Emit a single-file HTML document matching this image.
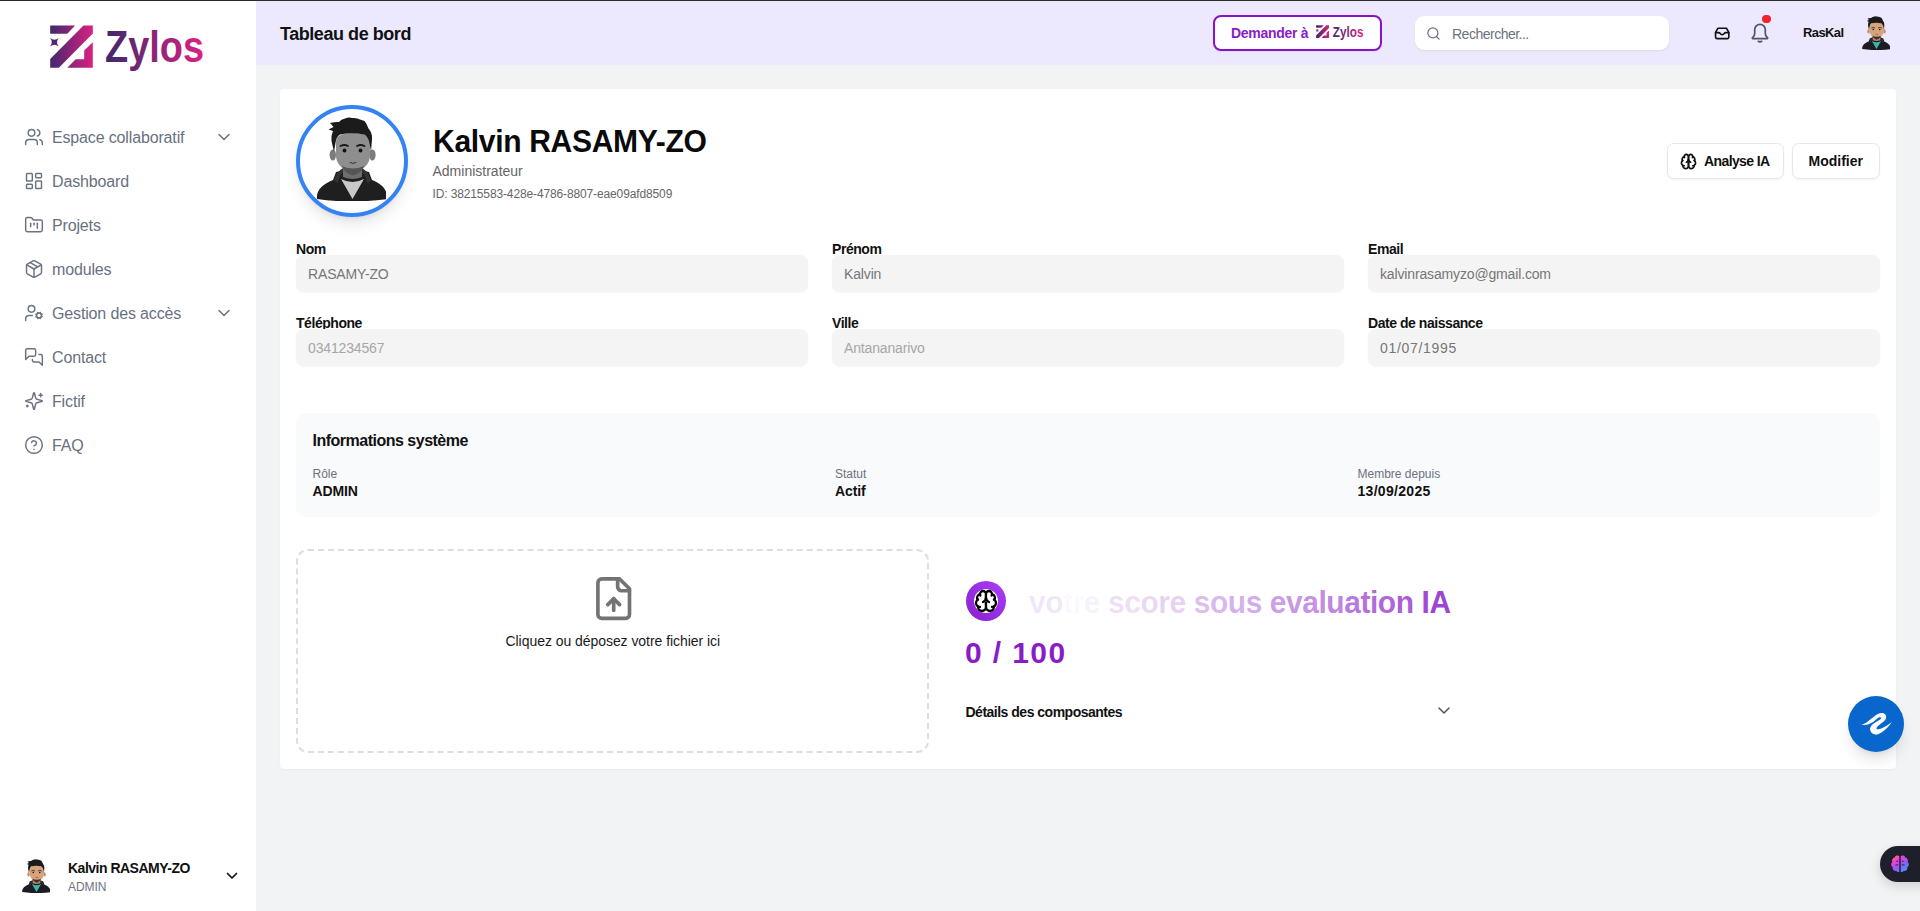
<!DOCTYPE html>
<html lang="fr">
<head>
<meta charset="utf-8">
<title>Zylos - Profil</title>
<style>
*{box-sizing:border-box;margin:0;padding:0}
html,body{width:1920px;height:911px;overflow:hidden}
body{font-family:"Liberation Sans",sans-serif;background:#f2f3f5;position:relative;color:#111}
.abs{position:absolute}
.topline{position:absolute;left:0;top:0;width:1920px;height:1px;background:#2b2b29;z-index:50}
/* sidebar */
.sidebar{position:absolute;left:0;top:0;width:256px;height:911px;background:#fff}
.nav{position:absolute;left:0;top:115px;width:256px}
.nav .item{position:absolute;left:0;width:256px;height:44px}
.nav .item svg.ic{position:absolute;left:24px;top:12px;width:20px;height:20px}
.nav .item .lbl{position:absolute;left:52px;top:13px;font-size:16px;line-height:20px;color:#687180;white-space:nowrap;letter-spacing:-0.15px}
.nav .item svg.chev{position:absolute;left:216px;top:15px;width:16px;height:14px}

.t{position:absolute;white-space:nowrap;line-height:1}
.avatar-ring{position:absolute;left:296px;top:105px;width:112px;height:112px;border-radius:50%;border:4px solid #3382f6;background:#fff;box-shadow:0 10px 15px -3px rgba(0,0,0,.1),0 4px 6px -4px rgba(0,0,0,.1);overflow:hidden}
.btn{position:absolute;top:143px;height:35.5px;background:#fff;border:1px solid #e5e7eb;border-radius:7px;box-shadow:0 1px 2px rgba(0,0,0,.05)}
.lab{font-size:14px;font-weight:700;color:#111;letter-spacing:-0.45px}
.inp{position:absolute;width:512px;height:37px;background:#f4f4f4;border-radius:8px;box-shadow:0 1px 2px rgba(0,0,0,.04)}
.val{font-size:14px;color:#767676;letter-spacing:-0.15px}
.ph{color:#a6a6a6}
.info{position:absolute;left:296px;top:413px;width:1584px;height:104px;background:#f9fafb;border-radius:10px}
.il{font-size:12px;color:#6b7280;letter-spacing:0px}
.iv{font-size:14px;font-weight:700;color:#111;letter-spacing:-0.1px}
.upload{position:absolute;left:296px;top:549px;width:633px;height:203.5px;border:2px dashed #dddee1;border-radius:12px;background:#fff}
/* header */
.h-title{position:absolute;left:280px;top:23px;font-size:18px;line-height:22px;font-weight:700;color:#111;letter-spacing:-0.45px;white-space:nowrap}
.ask{position:absolute;left:1213px;top:15px;width:169px;height:36px;border:2px solid #8a12c6;border-radius:8px;background:#fff;box-shadow:0 1px 2px rgba(0,0,0,.06)}
.ask .t{position:absolute;left:16px;top:8.2px;font-size:14px;line-height:16px;font-weight:700;color:#8a1cc7;letter-spacing:-0.3px;white-space:nowrap}
.search{position:absolute;left:1415px;top:15.5px;width:254px;height:34.5px;background:#fff;border-radius:9px;box-shadow:0 1px 2px rgba(0,0,0,.08)}
.search .t{position:absolute;left:37px;top:10px;font-size:14px;line-height:16px;color:#6b7280;letter-spacing:-0.5px;white-space:nowrap}
.raskal{position:absolute;left:1803px;top:26px;font-size:13px;line-height:14px;font-weight:700;color:#111;letter-spacing:-0.6px;white-space:nowrap}

.header{position:absolute;left:256px;top:0;width:1664px;height:65px;background:#ece9fe}
.main{position:absolute;left:256px;top:65px;width:1664px;height:846px;background:#f2f3f5}
.card{position:absolute;left:280px;top:89px;width:1616px;height:680px;background:#fff;border-radius:4px;box-shadow:0 1px 2px rgba(0,0,0,.04)}
</style>
</head>
<body>
<div class="topline"></div>
<svg width="0" height="0" style="position:absolute">
<defs>
<symbol id="av" viewBox="20 12 72 84">
  <path fill="var(--hood)" d="M23 94C22 85 29 79 39 75L42 67Q58.5 62 75 67L78 75C88 79 94 85 93 94Q58 99 23 94Z"/>
  <path fill="var(--hood2)" d="M40 76Q42 67 49 63L50 67Q45 70 44 78Z M77 76Q75 67 68 63L67 67Q72 70 73 78Z"/>
  <path fill="var(--skin2)" d="M49 58L49 72Q58.5 76 68 72L68 58Z"/>
  <path fill="var(--shirt)" d="M47 74Q58.5 80 70 74L58.5 94Z"/>
  <ellipse cx="38.8" cy="50" rx="3.2" ry="5.5" fill="var(--ear)"/>
  <ellipse cx="78.4" cy="50" rx="3.2" ry="5.5" fill="var(--ear)"/>
  <path fill="var(--skin)" d="M42 37Q42 28 59 28Q76 28 76 37L76 52Q75 60 67 65Q59 70 51 65Q43 60 42 52Z"/>
  <path fill="var(--beard)" d="M48 61Q59 66 70 61Q67 69 59 70.5Q51 69 48 61Z"/>
  <path fill="var(--hair)" d="M40 47L37.5 36Q37 30 39 26L34.5 24.5L39.5 22Q38 20 36 18Q42 16.5 45 17Q47 14 51 13.5Q55 12 58 13Q63 12.5 66 14.5L70.5 16Q73 19 74.5 23.5Q78.5 28 78 34L77 47L75.5 38Q74 31 70 29.5Q58 27 46 29.5Q42 32 41.5 38Z"/>
  <circle cx="50.5" cy="45.5" r="1.9" fill="#111"/><circle cx="66.5" cy="45.5" r="1.9" fill="#111"/>
  <path d="M46.5 41Q50.5 39 54 41M63 41Q66.5 39 70.5 41" stroke="var(--hair)" stroke-width="1.8" fill="none" stroke-linecap="round"/>
  <path d="M56 57.5Q59 59.5 62 57.5" stroke="#333" stroke-width="1" fill="none" stroke-linecap="round"/>
</symbol>
</defs>
</svg>
<div class="sidebar">
  <svg style="position:absolute;left:0;top:0" width="256" height="90" viewBox="0 0 256 90">
    <defs>
      <linearGradient id="lg1" gradientUnits="userSpaceOnUse" x1="0" y1="0" x2="43" y2="0"><stop offset="0" stop-color="#3f286b"/><stop offset="1" stop-color="#dc2183"/></linearGradient>
      <linearGradient id="lgt" gradientUnits="userSpaceOnUse" x1="106" y1="0" x2="204" y2="0"><stop offset="0" stop-color="#3f286b"/><stop offset="1" stop-color="#dc2183"/></linearGradient>
    </defs>
    <g transform="translate(50 25)" fill="url(#lg1)">
      <path d="M0.2 0.5H25.1L17.3 8.8H0.2Z"/>
      <path d="M33.5 0.5H42.8V8.6L8.9 42.8H0.2V34Z"/>
      <path d="M42.8 17.3V42.8H17.3L25.7 34.3H34.2V25.4Z"/>
      <path d="M4.4 11.2Q4.95 16.75 10.5 17.3Q4.95 17.85 4.4 23.4Q3.85 17.85 -1.7 17.3Q3.85 16.75 4.4 11.2Z" transform="rotate(45 4.4 17.3)"/>
    </g>
    <text x="105" y="62.3" font-family="Liberation Sans" font-weight="700" font-size="45" textLength="99" lengthAdjust="spacingAndGlyphs" fill="url(#lgt)">Zylos</text>
  </svg>
  <div class="nav">
  <div class="item" style="top:0px"><svg class="ic" fill="none" stroke="#6b7280" stroke-width="1.75" stroke-linecap="round" stroke-linejoin="round" viewBox="0 0 24 24"><path d="M16 21v-2a4 4 0 0 0-4-4H6a4 4 0 0 0-4 4v2"/><circle cx="9" cy="7" r="4"/><path d="M22 21v-2a4 4 0 0 0-3-3.87"/><path d="M16 3.13a4 4 0 0 1 0 7.75"/></svg><span class="lbl">Espace collaboratif</span><svg class="chev" viewBox="0 0 16 14" fill="none" stroke="#6b7280" stroke-width="1.5" stroke-linecap="round" stroke-linejoin="round"><path d="M3 4.5l5 5 5-5"/></svg></div>
  <div class="item" style="top:44px"><svg class="ic" fill="none" stroke="#6b7280" stroke-width="1.75" stroke-linecap="round" stroke-linejoin="round" viewBox="0 0 24 24"><rect width="7" height="9" x="3" y="3" rx="1"/><rect width="7" height="5" x="14" y="3" rx="1"/><rect width="7" height="9" x="14" y="12" rx="1"/><rect width="7" height="5" x="3" y="16" rx="1"/></svg><span class="lbl">Dashboard</span></div>
  <div class="item" style="top:88px"><svg class="ic" fill="none" stroke="#6b7280" stroke-width="1.75" stroke-linecap="round" stroke-linejoin="round" viewBox="0 0 24 24"><path d="M4 20h16a2 2 0 0 0 2-2V8a2 2 0 0 0-2-2h-7.93a2 2 0 0 1-1.66-.9l-.82-1.2A2 2 0 0 0 7.93 3H4a2 2 0 0 0-2 2v13c0 1.1.9 2 2 2Z"/><path d="M8 10v4"/><path d="M12 10v2"/><path d="M16 10v6"/></svg><span class="lbl">Projets</span></div>
  <div class="item" style="top:132px"><svg class="ic" fill="none" stroke="#6b7280" stroke-width="1.75" stroke-linecap="round" stroke-linejoin="round" viewBox="0 0 24 24"><path d="m7.5 4.27 9 5.15"/><path d="M21 8a2 2 0 0 0-1-1.73l-7-4a2 2 0 0 0-2 0l-7 4A2 2 0 0 0 3 8v8a2 2 0 0 0 1 1.73l7 4a2 2 0 0 0 2 0l7-4A2 2 0 0 0 21 16Z"/><path d="m3.3 7 8.7 5 8.7-5"/><path d="M12 22V12"/></svg><span class="lbl">modules</span></div>
  <div class="item" style="top:176px"><svg class="ic" fill="none" stroke="#6b7280" stroke-width="1.75" stroke-linecap="round" stroke-linejoin="round" viewBox="0 0 24 24"><path d="M10 15H6a4 4 0 0 0-4 4v2"/><path d="m14.305 16.53.923-.382"/><path d="m15.228 13.852-.923-.383"/><path d="m16.852 12.228-.383-.923"/><path d="m16.852 17.772-.383.924"/><path d="m19.148 12.228.383-.923"/><path d="m19.53 18.696-.382-.924"/><path d="m20.772 13.852.924-.383"/><path d="m20.772 16.148.924.383"/><circle cx="18" cy="15" r="3"/><circle cx="9" cy="7" r="4"/></svg><span class="lbl">Gestion des accès</span><svg class="chev" viewBox="0 0 16 14" fill="none" stroke="#6b7280" stroke-width="1.5" stroke-linecap="round" stroke-linejoin="round"><path d="M3 4.5l5 5 5-5"/></svg></div>
  <div class="item" style="top:220px"><svg class="ic" fill="none" stroke="#6b7280" stroke-width="1.75" stroke-linecap="round" stroke-linejoin="round" viewBox="0 0 24 24"><path d="M14 9a2 2 0 0 1-2 2H6l-4 4V4a2 2 0 0 1 2-2h8a2 2 0 0 1 2 2z"/><path d="M18 9h2a2 2 0 0 1 2 2v11l-4-4h-6a2 2 0 0 1-2-2v-1"/></svg><span class="lbl">Contact</span></div>
  <div class="item" style="top:264px"><svg class="ic" fill="none" stroke="#6b7280" stroke-width="1.75" stroke-linecap="round" stroke-linejoin="round" viewBox="0 0 24 24"><path d="M9.937 15.5A2 2 0 0 0 8.5 14.063l-6.135-1.582a.5.5 0 0 1 0-.962L8.5 9.936A2 2 0 0 0 9.937 8.5l1.582-6.135a.5.5 0 0 1 .963 0L14.063 8.5A2 2 0 0 0 15.5 9.937l6.135 1.581a.5.5 0 0 1 0 .964L15.5 14.063a2 2 0 0 0-1.437 1.437l-1.582 6.135a.5.5 0 0 1-.963 0z"/><path d="M20 3v4"/><path d="M22 5h-4"/><path d="M4 17v2"/><path d="M5 18H3"/></svg><span class="lbl">Fictif</span></div>
  <div class="item" style="top:308px"><svg class="ic" fill="none" stroke="#6b7280" stroke-width="1.75" stroke-linecap="round" stroke-linejoin="round" viewBox="0 0 24 24"><circle cx="12" cy="12" r="10"/><path d="M9.09 9a3 3 0 0 1 5.83 1c0 2-3 3-3 3"/><path d="M12 17h.01"/></svg><span class="lbl">FAQ</span></div>
  </div>
</div>
<div class="header"></div>
<div class="h-title">Tableau de bord</div>
<div class="ask"><span class="t">Demander à</span>
  <svg style="position:absolute;left:101px;top:8.2px" width="13.3" height="13.3" viewBox="0 0 43 43"><defs><linearGradient id="lg2" gradientUnits="userSpaceOnUse" x1="0" y1="0" x2="43" y2="0"><stop offset="0" stop-color="#3d2a6c"/><stop offset="1" stop-color="#d92382"/></linearGradient></defs><g fill="url(#lg2)"><path d="M0.2 0.5H25.1L17.3 8.8H0.2Z"/><path d="M33.5 0.5H42.8V8.6L8.9 42.8H0.2V34Z"/><path d="M42.8 17.3V42.8H17.3L25.7 34.3H34.2V25.4Z"/><path d="M4.4 11.2Q4.95 16.75 10.5 17.3Q4.95 17.85 4.4 23.4Q3.85 17.85 -1.7 17.3Q3.85 16.75 4.4 11.2Z" transform="rotate(45 4.4 17.3)"/></g></svg>
  <svg style="position:absolute;left:117px;top:7px" width="33" height="18" viewBox="0 0 33 18"><defs><linearGradient id="lg3" x1="0" y1="0" x2="1" y2="0"><stop offset="0" stop-color="#3d2a6c"/><stop offset="1" stop-color="#d92382"/></linearGradient></defs><text x="0.8" y="12.7" font-family="Liberation Sans" font-weight="700" font-size="14.8" textLength="30.6" lengthAdjust="spacingAndGlyphs" fill="url(#lg3)">Zylos</text></svg>
</div>
<div class="search">
  <svg style="position:absolute;left:11px;top:10px" width="15" height="15" viewBox="0 0 24 24" fill="none" stroke="#6b7280" stroke-width="2" stroke-linecap="round"><circle cx="11" cy="11" r="8"/><path d="m21 21-4.3-4.3"/></svg>
  <span class="t">Rechercher...</span>
</div>
<svg style="position:absolute;left:1714px;top:25.8px" width="16.4" height="14.6" viewBox="0 0 18 16" fill="none" stroke="#111" stroke-width="1.8" stroke-linejoin="round" stroke-linecap="round"><path d="M4.2 2.5h9.6l2.5 4.5v5.2a1.6 1.6 0 0 1-1.6 1.6H3.3a1.6 1.6 0 0 1-1.6-1.6V7z"/><path d="M1.8 7.2h3.2c.8 0 1.4.5 1.8 1.1.5.8 1.2 1.2 2.2 1.2s1.7-.4 2.2-1.2c.4-.6 1-1.1 1.8-1.1h3.2"/></svg>
<svg style="position:absolute;left:1750px;top:22px" width="20" height="22" viewBox="0 0 20 22" fill="none" stroke="#4b5563" stroke-width="1.7" stroke-linecap="round" stroke-linejoin="round"><path d="M10 2.3a5.3 5.3 0 0 0-5.3 5.3v3.6c0 1.4-.6 2.8-1.6 3.8l-.6.6c-.4.4-.1 1 .4 1h14.2c.5 0 .8-.6.4-1l-.6-.6c-1-1-1.6-2.4-1.6-3.8V7.6A5.3 5.3 0 0 0 10 2.3z"/><path d="M8.3 19.3q1.7 1.2 3.4 0"/></svg>
<div style="position:absolute;left:1762px;top:14.5px;width:8.5px;height:8.5px;border-radius:50%;background:#f0232f"></div>
<div class="raskal">RasKal</div>
<div class="main"></div>
<div class="card"></div>
<div class="avatar-ring"><svg style="position:absolute;left:14px;top:8px" width="72" height="84" viewBox="0 0 72 84"><use href="#av" width="72" height="84" style="--skin:#8e8e8e;--skin2:#6e6e6e;--hair:#1b1b1b;--hood:#1f1f1f;--hood2:#333;--shirt:#c8c8c8;--ear:#7c7c7c;--beard:#555"/></svg></div>
<div class="t " style="left:432.5px;top:126.06px;font-size:31px;font-weight:700;color:#0a0a0a;letter-spacing:-0.35px;transform:scaleX(0.97);transform-origin:0 0">Kalvin RASAMY-ZO</div>
<div class="t " style="left:432.5px;top:164.35px;font-size:14px;color:#666;letter-spacing:0px">Administrateur</div>
<div class="t " style="left:432.5px;top:187.64px;font-size:12px;color:#666;letter-spacing:-0.13px">ID: 38215583-428e-4786-8807-eae09afd8509</div>
<div class="btn" style="left:1667px;width:117px"></div>
<svg style="position:absolute;left:1679.5px;top:152.5px" width="17" height="17" fill="none" stroke="#111" stroke-width="2.4" stroke-linecap="round" stroke-linejoin="round" viewBox="0 0 24 24"><path d="M12 5a3 3 0 1 0-5.997.125 4 4 0 0 0-2.526 5.77 4 4 0 0 0 .556 6.588A4 4 0 1 0 12 18Z"/><path d="M12 5a3 3 0 1 1 5.997.125 4 4 0 0 1 2.526 5.77 4 4 0 0 1-.556 6.588A4 4 0 1 1 12 18Z"/><path d="M15 13a4.5 4.5 0 0 1-3-4 4.5 4.5 0 0 1-3 4"/><path d="M17.599 6.5a3 3 0 0 0 .399-1.375"/><path d="M6.003 5.125A3 3 0 0 0 6.401 6.5"/><path d="M3.477 10.896a4 4 0 0 1 .585-.396"/><path d="M19.938 10.5a4 4 0 0 1 .585.396"/><path d="M6 18a4 4 0 0 1-1.967-.516"/><path d="M19.967 17.484A4 4 0 0 1 18 18"/></svg>
<div class="t " style="left:1704px;top:154.25px;font-size:14px;font-weight:700;color:#111;letter-spacing:-0.6px">Analyse IA</div>
<div class="btn" style="left:1792px;width:87.5px"></div>
<div class="t " style="left:1808.5px;top:154.25px;font-size:14px;font-weight:700;color:#111;letter-spacing:0px">Modifier</div>
<div class="t lab" style="left:296px;top:241.55px;font-size:14px;">Nom</div>
<div class="inp" style="left:296px;top:255px"></div>
<div class="t val" style="left:308px;top:266.55px;font-size:14px;">RASAMY-ZO</div>
<div class="t lab" style="left:832px;top:241.55px;font-size:14px;">Prénom</div>
<div class="inp" style="left:832px;top:255px"></div>
<div class="t val" style="left:844px;top:266.55px;font-size:14px;">Kalvin</div>
<div class="t lab" style="left:1368px;top:241.55px;font-size:14px;">Email</div>
<div class="inp" style="left:1368px;top:255px"></div>
<div class="t val" style="left:1380px;top:266.55px;font-size:14px;">kalvinrasamyzo@gmail.com</div>
<div class="t lab" style="left:296px;top:315.55px;font-size:14px;">Téléphone</div>
<div class="inp" style="left:296px;top:329px"></div>
<div class="t val ph" style="left:308px;top:340.55px;font-size:14px;">0341234567</div>
<div class="t lab" style="left:832px;top:315.55px;font-size:14px;">Ville</div>
<div class="inp" style="left:832px;top:329px"></div>
<div class="t val ph" style="left:844px;top:340.55px;font-size:14px;">Antananarivo</div>
<div class="t lab" style="left:1368px;top:315.55px;font-size:14px;">Date de naissance</div>
<div class="inp" style="left:1368px;top:329px"></div>
<div class="t val" style="left:1380px;top:340.55px;font-size:14px;letter-spacing:0.7px">01/07/1995</div>
<div class="info"></div>
<div class="t " style="left:312.5px;top:433.46px;font-size:16px;font-weight:700;color:#111;letter-spacing:-0.5px">Informations système</div>
<div class="t il" style="left:312.5px;top:467.84px;font-size:12px;">Rôle</div>
<div class="t iv" style="left:312.5px;top:483.95px;font-size:14px;">ADMIN</div>
<div class="t il" style="left:835px;top:467.84px;font-size:12px;">Statut</div>
<div class="t iv" style="left:835px;top:483.95px;font-size:14px;">Actif</div>
<div class="t il" style="left:1357.5px;top:467.84px;font-size:12px;">Membre depuis</div>
<div class="t iv" style="left:1357.5px;top:483.95px;font-size:14px;letter-spacing:0.3px">13/09/2025</div>
<div class="upload"></div>
<div class="t " style="left:505.5px;top:634.35px;font-size:14px;color:#1a1a1a;letter-spacing:-0.05px">Cliquez ou déposez votre fichier ici</div>
<svg style="position:absolute;left:589.5px;top:575.2px" width="47.4" height="47.4" viewBox="0 0 24 24" fill="none" stroke="#737373" stroke-width="1.85" stroke-linecap="round" stroke-linejoin="round"><path d="M15 2H6a2 2 0 0 0-2 2v16a2 2 0 0 0 2 2h12a2 2 0 0 0 2-2V7Z"/><path d="M14 2v4a2 2 0 0 0 2 2h4"/><path d="M12 12v6"/><path d="m15 15-3-3-3 3"/></svg>
<div style="position:absolute;left:966px;top:581px;width:40px;height:40px;border-radius:50%;background:linear-gradient(45deg,#8a1fd0,#a83ff7)"></div>
<div style="position:absolute;left:974px;top:589px;width:24px;height:24px;border-radius:50%;background:#fff"></div>
<svg style="position:absolute;left:974px;top:589px" width="24" height="24" viewBox="0 0 24 24" fill="#fff" stroke="#000" stroke-width="2.3" stroke-linecap="round" stroke-linejoin="round"><path d="M12 5a3 3 0 1 0-5.997.125 4 4 0 0 0-2.526 5.77 4 4 0 0 0 .556 6.588A4 4 0 1 0 12 18Z"/><path d="M12 5a3 3 0 1 1 5.997.125 4 4 0 0 1 2.526 5.77 4 4 0 0 1-.556 6.588A4 4 0 1 1 12 18Z"/><path d="M15 13a4.5 4.5 0 0 1-3-4 4.5 4.5 0 0 1-3 4"/><path d="M17.599 6.5a3 3 0 0 0 .399-1.375"/><path d="M6.003 5.125A3 3 0 0 0 6.401 6.5"/><path d="M3.477 10.896a4 4 0 0 1 .585-.396"/><path d="M19.938 10.5a4 4 0 0 1 .585.396"/><path d="M6 18a4 4 0 0 1-1.967-.516"/><path d="M19.967 17.484A4 4 0 0 1 18 18"/></svg>
<div class="t " style="left:1029px;top:586.56px;font-size:31px;font-weight:700;letter-spacing:-0.45px;transform:scaleX(0.966);transform-origin:0 0"><span style="color:rgba(147,51,206,0.120)">v</span><span style="color:rgba(147,51,206,0.120)">o</span><span style="color:rgba(147,51,206,0.030)">t</span><span style="color:rgba(147,51,206,0.030)">r</span><span style="color:rgba(147,51,206,0.080)">e</span> <span style="color:rgba(147,51,206,0.154)">s</span><span style="color:rgba(147,51,206,0.174)">c</span><span style="color:rgba(147,51,206,0.195)">o</span><span style="color:rgba(147,51,206,0.219)">r</span><span style="color:rgba(147,51,206,0.243)">e</span> <span style="color:rgba(147,51,206,0.327)">s</span><span style="color:rgba(147,51,206,0.356)">o</span><span style="color:rgba(147,51,206,0.387)">u</span><span style="color:rgba(147,51,206,0.418)">s</span> <span style="color:rgba(147,51,206,0.482)">e</span><span style="color:rgba(147,51,206,0.516)">v</span><span style="color:rgba(147,51,206,0.550)">a</span><span style="color:rgba(147,51,206,0.585)">l</span><span style="color:rgba(147,51,206,0.621)">u</span><span style="color:rgba(147,51,206,0.657)">a</span><span style="color:rgba(147,51,206,0.694)">t</span><span style="color:rgba(147,51,206,0.732)">i</span><span style="color:rgba(147,51,206,0.771)">o</span><span style="color:rgba(147,51,206,0.809)">n</span> <span style="color:rgba(147,51,206,0.889)">I</span><span style="color:rgba(147,51,206,0.930)">A</span></div>
<div class="t " style="left:965px;top:637.50px;font-size:30px;font-weight:700;color:#8a1cc7;letter-spacing:1.4px">0 / 100</div>
<div class="t " style="left:965.5px;top:704.65px;font-size:14px;font-weight:700;color:#111;letter-spacing:-0.5px">Détails des composantes</div>
<svg style="position:absolute;left:1436px;top:704px" width="16" height="14" viewBox="0 0 16 14" fill="none" stroke="#4b5563" stroke-width="1.5" stroke-linecap="round" stroke-linejoin="round"><path d="M3 4l5 5 5-5"/></svg>
<div style="position:absolute;left:1848px;top:696px;width:56px;height:56px;border-radius:50%;background:#0866cc;box-shadow:0 10px 15px -3px rgba(0,0,0,.12),0 4px 6px -4px rgba(0,0,0,.1)">
<svg width="56" height="56" viewBox="0 0 56 56" style="position:absolute;left:0;top:0"><path fill="#fff" d="M12.2 28.5C17 29 21 24 25.2 21.2C29 18.2 31.5 17 33.9 17.1C36.5 17.2 38.4 19 38.2 21.2C38 24 35 26 33.1 27.6C31 29.2 28.5 31 28.4 32.3C28.6 33.6 30 33.6 33.9 32.3C37 31 41 28 43.8 26C41.5 29.5 38 33.5 33.9 36.3C31 38 29 38.8 27.6 38.6C24.5 38.4 22.4 36.5 22 33.1C21.8 30.5 25 27.6 29.2 25.2C31 24 33 23 33.1 22.4C33 21 31 21 29.2 22.4C27 24 25 26.5 23.6 26.8C20 29 16 29.5 12.2 28.5Z"/></svg></div>
<div style="position:absolute;left:1880px;top:846px;width:60px;height:36px;border-radius:18px;background:#1f1e2b;box-shadow:0 4px 12px rgba(0,0,0,.15)">
<svg width="22" height="22" viewBox="0 0 24 24" style="position:absolute;left:9px;top:7px"><defs><linearGradient id="bg1" x1="0.1" y1="0" x2="0.9" y2="1"><stop offset="0" stop-color="#ff8c3a"/><stop offset=".25" stop-color="#f23fd6"/><stop offset=".6" stop-color="#8e5cf5"/><stop offset="1" stop-color="#2fa6ff"/></linearGradient></defs><path fill="url(#bg1)" d="M11.2 3.5a3 3 0 0 0-5 1.5 3.5 3.5 0 0 0-2.6 4.8 3.5 3.5 0 0 0 .4 5.6 3.5 3.5 0 0 0 4 4.3 2.8 2.8 0 0 0 3.2.8Z M12.8 3.5a3 3 0 0 1 5 1.5 3.5 3.5 0 0 1 2.6 4.8 3.5 3.5 0 0 1-.4 5.6 3.5 3.5 0 0 1-4 4.3 2.8 2.8 0 0 1-3.2.8Z"/><path d="M8 9h2M7 13h3M14 9h2M14 13h3" stroke="#1f1e2b" stroke-width="1"/></svg></div>
<svg style="position:absolute;left:21px;top:859px" width="29" height="34" viewBox="0 0 72 84"><use href="#av" width="72" height="84" style="--skin:#d9a27a;--skin2:#b9825c;--hair:#1b1b1b;--hood:#1c1d22;--hood2:#2e3038;--shirt:#3fb3ad;--ear:#c98f68;--beard:#3a3030"/></svg>
<div class="t " style="left:68px;top:860.95px;font-size:14px;font-weight:700;color:#111;letter-spacing:-0.5px">Kalvin RASAMY-ZO</div>
<div class="t " style="left:68px;top:880.84px;font-size:12px;color:#6b7280;letter-spacing:-0.05px">ADMIN</div>
<svg style="position:absolute;left:224px;top:869px" width="16" height="14" viewBox="0 0 16 14" fill="none" stroke="#111" stroke-width="1.7" stroke-linecap="round" stroke-linejoin="round"><path d="M3.5 4.5l4.5 4.5 4.5-4.5"/></svg>
<svg style="position:absolute;left:1861px;top:16px" width="29" height="34" viewBox="0 0 72 84"><use href="#av" width="72" height="84" style="--skin:#d9a27a;--skin2:#b9825c;--hair:#1b1b1b;--hood:#1c1d22;--hood2:#2e3038;--shirt:#3fb3ad;--ear:#c98f68;--beard:#3a3030"/></svg>
</body>
</html>
